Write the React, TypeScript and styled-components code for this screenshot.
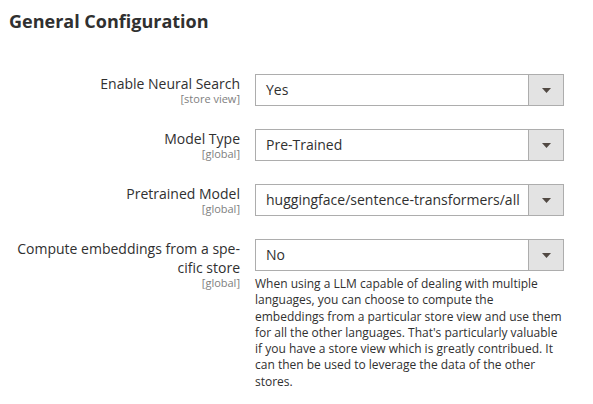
import React from "react";
import styled, { createGlobalStyle } from "styled-components";

const Global = createGlobalStyle`
  html, body { margin: 0; padding: 0; background: #ffffff; }
  body { font-family: "Open Sans", "Noto Sans", sans-serif; color: #303030; }
`;

const Page = styled.div`
  padding: 9px 0 0 9px;
  width: 584px;
`;

const Title = styled.h2`
  margin: 0 0 41px 0;
  font-size: 18px;
  line-height: 24px;
  font-weight: 700;
  color: #303030;
`;

const Rows = styled.div`
  display: flex;
  flex-direction: column;
  gap: 23px;
`;

const Row = styled.div`
  display: grid;
  grid-template-columns: 231px 309px;
  column-gap: 15px;
  align-items: start;
`;

const LabelCol = styled.div`
  text-align: right;
  hyphens: manual;
`;

const LabelText = styled.div`
  font-size: 14px;
  line-height: 19px;
  color: #303030;
`;

const Scope = styled.div`
  font-size: 11px;
  line-height: 11px;
  color: #808080;
`;

const Control = styled.div`
  display: flex;
  flex-direction: column;
`;

const Select = styled.div`
  box-sizing: border-box;
  height: 32px;
  border: 1px solid #adadad;
  display: flex;
  align-items: stretch;
  background: #fff;
`;

const Value = styled.div`
  flex: 1;
  padding-left: 10px;
  font-size: 14px;
  line-height: 30px;
  color: #303030;
  white-space: nowrap;
  overflow: hidden;
`;

const Toggle = styled.div`
  width: 34px;
  border-left: 1px solid #adadad;
  background: #e3e3e3;
  display: flex;
  align-items: center;
  justify-content: center;
`;

const Note = styled.div`
  margin-top: 5px;
  font-size: 12px;
  line-height: 16.3px;
  color: #303030;
`;

const Arrow = () => (
  <svg width="9" height="5" viewBox="0 0 9 5">
    <path d="M0 0 H9 L4.5 5 Z" fill="#514943" />
  </svg>
);

type Field = { label: string; scope: string; value: string; note?: string };

const fields: Field[] = [
  { label: "Enable Neural Search", scope: "[store view]", value: "Yes" },
  { label: "Model Type", scope: "[global]", value: "Pre-Trained" },
  { label: "Pretrained Model", scope: "[global]", value: "huggingface/sentence-transformers/all" },
  {
    label: "Compute embeddings from a spe\u00ADcific store",
    scope: "[global]",
    value: "No",
    note:
      "When using a LLM capable of dealing with multiple languages, you can choose to compute the embeddings from a particular store view and use them for all the other languages. That's particularly valuable if you have a store view which is greatly contribued. It can then be used to leverage the data of the other stores.",
  },
];

export default function App() {
  return (
    <Page>
      <Global />
      <Title>General Configuration</Title>
      <Rows>
        {fields.map((f) => (
          <Row key={f.label}>
            <LabelCol>
              <LabelText>{f.label}</LabelText>
              <Scope>{f.scope}</Scope>
            </LabelCol>
            <Control>
              <Select>
                <Value>{f.value}</Value>
                <Toggle>
                  <Arrow />
                </Toggle>
              </Select>
              {f.note && <Note>{f.note}</Note>}
            </Control>
          </Row>
        ))}
      </Rows>
    </Page>
  );
}
